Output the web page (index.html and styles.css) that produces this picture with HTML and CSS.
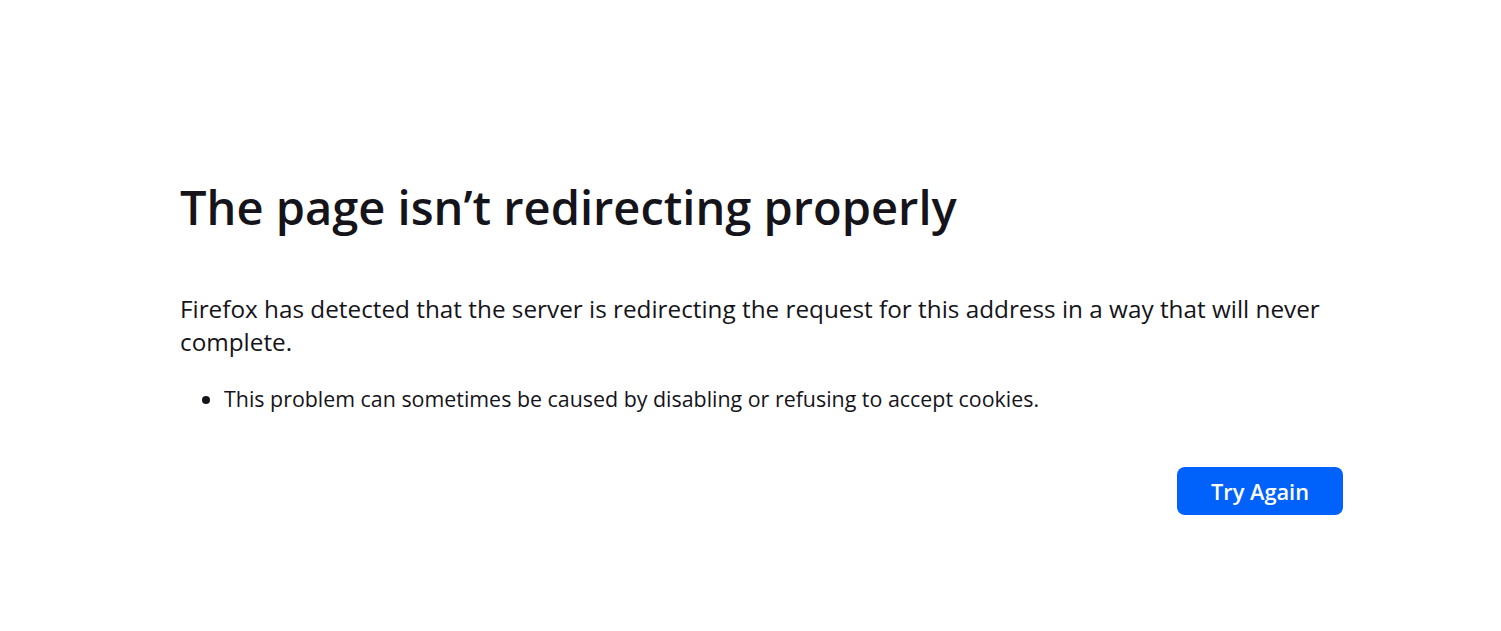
FILE: index.html
```html
<!DOCTYPE html>
<html lang="en">
<head>
    <meta charset="UTF-8">
    <title>Problem loading page</title>
    <link rel="stylesheet" href="styles.css">
</head>
<body>
    <div class="container">
        <h1 class="title">The page isn’t redirecting properly</h1>
        <div class="desc">
            <p>Firefox has detected that the server is redirecting the request for this address in a way that will never complete.</p>
            <ul>
                <li>This problem can sometimes be caused by disabling or refusing to accept cookies.</li>
            </ul>
        </div>
        <div class="actions">
            <button class="primary">Try Again</button>
        </div>
    </div>
</body>
</html>
```

FILE: styles.css
```css
body {
    margin: 0;
    font-family: "Open Sans", "Noto Sans", sans-serif;
    color: #15141a;
    background: #fff;
}
.container {
    width: 1163px;
    margin-left: 180px;
    padding-top: 174px;
}
.title {
    margin: 0;
    font-size: 47px;
    font-weight: 600;
    line-height: 66px;
}
.desc {
    margin-top: 52px;
    font-size: 24.3px;
    line-height: 33px;
}
.desc p {
    margin: 0;
}
.desc ul {
    margin: 26px 0 0;
    padding-left: 44px;
    font-size: 21.4px;
    line-height: 30px;
}
.actions {
    display: flex;
    justify-content: flex-end;
    margin-top: 53px;
}
.primary {
    width: 166px;
    height: 48px;
    border: none;
    border-radius: 8px;
    background: #0062fa;
    color: #fff;
    font-family: inherit;
    font-size: 21.8px;
    font-weight: 600;
    cursor: pointer;
}
```
